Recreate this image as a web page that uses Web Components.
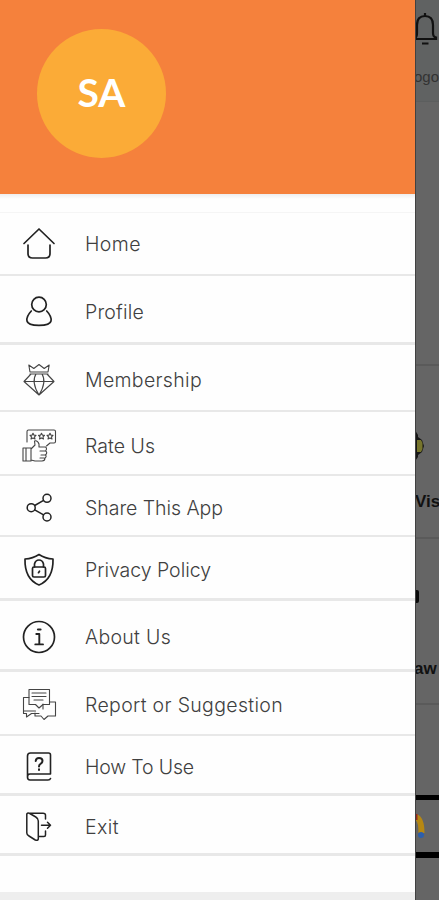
<!DOCTYPE html>
<html lang="en">
<head>
<meta charset="utf-8">
<title>Menu</title>
<style>
  body {
    margin: 0;
    height: 900px;
    overflow: hidden;
    font-family: Inter, "Liberation Sans", sans-serif;
  }
</style>
</head>
<body>
<app-shell></app-shell>

<script>
// Icons are drawn on a 36 x 36 grid
const ICONS = {
  home: `<g stroke-width="1.7"><path d="M3 17.500 18 3l15 14.500"/><path d="M7 19v8.500q0 4.500 4.500 4.500h13q4.500 0 4.500-4.500V19"/></g>`,
  profile: `<g stroke-width="1.7"><circle cx="18" cy="10.500" r="7.300"/><path d="M10.300 17C7 20.500 5.500 24.500 6 27 7 32.800 29 32.800 30 27 30.500 24.500 29 20.500 25.700 17"/></g>`,
  membership: `<g stroke-width="1.100" stroke="#444"><path d="M9 10 7.800 3l5 3.500L18 2.500l5.200 4 5-3.500L27 10zM9 12h18M10 12l-7 7.500L18 33l15-13.500L26 12M3 19.500h30M15 12q-5 8 3 21 8-13 3-21"/></g>`,
  rate: `<g stroke-width="1.100" stroke="#444"><path d="M6 14V3.500q0-1.500 1.500-1.500H33q1.500 0 1.500 1.500v10q0 1.500-1.500 1.500h-4L25.500 18"/><path d="m12 5.200.9 1.900 2.100.2-1.500 1.500.5 2.200-2-1.100-2 1.100.5-2.200L9 7.300l2.100-.2zM20.500 5.200l.9 1.900 2.100.2-1.500 1.500.5 2.200-2-1.100-2 1.100.5-2.200-1.500-1.500 2.100-.2zM29 5.200l.9 1.900 2.100.2-1.500 1.500.5 2.200-2-1.100-2 1.100.5-2.200-1.500-1.500 2.100-.2z"/><path d="M2 20h8v13H2zM5 20v13M10 21l4-4-.5-4q3-1 4.500 3v3h6.500q2 1.500 0 4 2.500 1.500 0 4 1.500 1.500-.5 3 0 3-3 3H14l-4-1M19 23h5M20 27h4M19 30h4"/></g>`,
  share: `<g stroke-width="1.500"><circle cx="10.200" cy="17.700" r="4"/><circle cx="26" cy="8.300" r="4"/><circle cx="26" cy="27" r="4"/><path d="m13.700 15.500 8.900-5.200M13.700 19.800l8.900 5.100"/></g>`,
  privacy: `<g stroke-width="1.700"><path d="M18 2.500q6 4 14 4.500.5 20-14 26Q3.500 27 4 7q8-.5 14-4.500z"/><rect x="11.500" y="15" width="13" height="10" rx="1.500"/><path d="M13.500 15V12q1-4 4.500-4t4.500 4v3M17.500 20.700l1-1.500"/></g>`,
  about: `<circle cx="18" cy="18" r="15.500" stroke-width="1.700"/><path d="M15.300 15h3v10M14.300 25.400h7.700" stroke-width="1.900"/><path d="M17 10.500h2.500" stroke-width="2.200"/>`,
  report: `<g stroke-width="1.100" stroke="#444"><path d="M8 2.500h20.500v15H22L18 21l-3.500-3.500H8zM11 6h14M11 9.500h14M13 13h9"/><path d="M8 10.500H2.500v16h3V30l5-3.500H18"/><path d="M28.500 15h6v14H27l-4 3.500-3-3.500h-6v-3M22 17v5M2.500 24h12"/></g>`,
  help: `<g stroke-width="1.600"><path d="M6.500 28.500V7q0-3 3-3h18q2 0 2 2v19H9q-2.500 0-2.500 3T9 31h18q2 0 2.500-1.500"/><path d="M14.700 12q.3-3 3.300-3 3.500 0 3.500 2.800 0 2-2 3Q18 15.500 18 17.500M18 20.300v.6" stroke-width="2"/></g>`,
  exit: `<g stroke-width="1.500"><path d="M5.800 5q1-1.500 3-.5l6 3.500q2.500 1.500 2.500 4v18q-.5 2-3 1L8 27q-2.200-1.200-2.200-3zM8 4.200h14q2.500 0 2.500 2V10M17.500 27.500H23q1.500 0 1.500-1.500v-4"/><path d="M20.500 16.200h9M26.500 13.200l3 3-3 3"/></g>`,
};

function attach (host, html) {
  const template = document.createElement("template");
  template.innerHTML = html;
  const shadow = host.attachShadow({mode: "open"});
  shadow.appendChild(template.content.cloneNode(true));
  return shadow;
}

class MenuIcon extends HTMLElement {
  connectedCallback () {
    attach(this, `<style>
      :host { display: block; width: 36px; height: 36px; }
      svg { display: block; fill: none; stroke: #222; stroke-linecap: round; stroke-linejoin: round; }
    </style>
    <svg width="36" height="36" viewBox="0 0 36 36">${ICONS[this.getAttribute("name")]}</svg>`);
  }
}

class MenuItem extends HTMLElement {
  connectedCallback () {
    const shadow = attach(this, `<style>
      :host {
        display: flex;
        align-items: center;
        gap: 28px;
        box-sizing: border-box;
        height: ${this.getAttribute("height")}px;
        padding: ${this.getAttribute("drop") || 4}px 0 0 21px;
        border-bottom: ${this.getAttribute("line") || 2}px solid #e8e8e8;
        color: #404040;
        font-size: 19.5px;
        font-weight: 300;
        line-height: 26px;
        white-space: nowrap;
      }
      menu-icon { flex: none; }
    </style>
    <menu-icon name="${this.getAttribute("icon")}"></menu-icon>
    <span id="label"><slot></slot></span>`);

    // Spread the letters so that the label fills its measure
    const label = shadow.getElementById("label");
    const extra = this.getAttribute("measure") - label.getBoundingClientRect().width;
    label.style.letterSpacing = extra / this.textContent.length + "px";
  }
}

class UserAvatar extends HTMLElement {
  connectedCallback () {
    attach(this, `<style>
      :host {
        display: grid;
        place-items: center;
        box-sizing: border-box;
        width: 129px;
        height: 129px;
        padding-bottom: 3px;
        border-radius: 50%;
        background: #fbab37;
        color: white;
        font-family: Lato, sans-serif;
        font-size: 39px;
        font-weight: bold;
        line-height: 1;
      }
    </style><span><slot></slot></span>`);
  }
}

class NavDrawer extends HTMLElement {
  connectedCallback () {
    attach(this, `<style>
      :host {
        display: flex;
        flex-direction: column;
        flex: none;
        width: 415px;
        height: 900px;
        background: #fefefe;
      }
      header {
        box-sizing: border-box;
        height: 194px;
        padding: 29px 37px;
        background: #f5813c;
      }
      nav {
        padding-top: 18px;
        background: linear-gradient(#eee, #fefefe 5px, #fefefe 18px, #f5f5f5 18px, #f5f5f5 19px, #fefefe 19px);
      }
      footer { margin-top: auto; height: 8px; background: #eee; }
    </style>
    <header><slot name="user"></slot></header>
    <nav><slot></slot></nav>
    <footer></footer>`);
  }
}

// The edge of the page that stays visible next to the open drawer
class DimmedPage extends HTMLElement {
  connectedCallback () {
    attach(this, `<style>
      :host {
        display: flex;
        flex-direction: column;
        flex: 1;
        box-sizing: border-box;
        min-width: 0;
        height: 900px;
        overflow: hidden;
        background: #656565;
        border-left: 1px solid #414141;
        font-family: "Liberation Sans", sans-serif;
        color: #111;
      }
      section {
        flex: none;
        box-sizing: border-box;
        border-bottom: 2px solid #5a5a5a;
      }
      svg { display: block; }
      p { margin: 0; font-size: 17px; line-height: 20px; white-space: nowrap; }
      .top { height: 102px; padding-top: 10px; background: #606262; border-bottom: 1px solid #5c5e5e; }
      .top p { margin-top: 21px; margin-left: -2px; color: #333; font-size: 15px; }
      .banner { height: 264px; }
      .visit { height: 173px; padding-top: 60px; }
      .visit p, .draw p { font-weight: bold; }
      .visit p { margin-top: 26px; margin-left: -1px; }
      .draw { height: 166px; padding-top: 51px; }
      .draw p { margin-top: 55px; margin-left: -2px; }
      .space { height: 95px; border-bottom: 5px solid #000; }
      .ad { height: 58px; padding-top: 13px; border-bottom: 6px solid #000; }
    </style>
    <section class="top">
      <svg width="23" height="36" viewBox="0 0 23 36" fill="none" stroke="#111" stroke-width="2.2">
        <path d="M9 3v3M-1 28q2-1 2-5v-8Q1 6 9 6t8 9v8q0 4 3 4.500V29H-1M6 33.500h6.500"/>
      </svg>
      <p>ogo</p>
    </section>
    <section class="banner"></section>
    <section class="visit">
      <svg width="12" height="40" viewBox="0 0 12 40">
        <path d="M-1 4 2 9v2l4 3 2 6-2 6-4 3v2l-3 4z" fill="#171717"/>
        <path d="M1 14h4l1.500 3v6L5 26H1z" fill="#77752c"/>
      </svg>
      <p>Vis</p>
    </section>
    <section class="draw">
      <svg width="6" height="14" viewBox="0 0 6 14"><rect x="-3" width="6" height="13" rx="2" fill="#0b0b0b"/></svg>
      <p>aw</p>
    </section>
    <section class="space"></section>
    <section class="ad">
      <svg width="12" height="28" viewBox="0 0 12 28" fill="none">
        <path d="M0 4q5.500 2 5.500 16" stroke="#b68813" stroke-width="6"/>
        <path d="M-1 1v6" stroke="#942922" stroke-width="5"/>
        <circle cx="5" cy="22" r="3" fill="#2d5fac"/>
      </svg>
    </section>`);
  }
}

class AppShell extends HTMLElement {
  connectedCallback () {
    attach(this, `<style>
      :host { display: flex; width: 439px; height: 900px; }
    </style>
    <nav-drawer>
      <user-avatar slot="user">SA</user-avatar>
      <menu-item icon="home" height="64" drop="2" measure="56">Home</menu-item>
      <menu-item icon="profile" height="69" line="3" drop="6" measure="59">Profile</menu-item>
      <menu-item icon="membership" height="67" measure="117">Membership</menu-item>
      <menu-item icon="rate" height="64" drop="6" measure="70">Rate Us</menu-item>
      <menu-item icon="share" height="61" measure="138">Share This App</menu-item>
      <menu-item icon="privacy" height="64" line="3" measure="126">Privacy Policy</menu-item>
      <menu-item icon="about" height="71" line="3" measure="86">About Us</menu-item>
      <menu-item icon="report" height="64" measure="198">Report or Suggestion</menu-item>
      <menu-item icon="help" height="60" line="3" measure="109">How To Use</menu-item>
      <menu-item icon="exit" height="60" line="3" measure="34">Exit</menu-item>
    </nav-drawer>
    <dimmed-page></dimmed-page>`);
  }
}

customElements.define("menu-icon", MenuIcon);
customElements.define("menu-item", MenuItem);
customElements.define("user-avatar", UserAvatar);
customElements.define("nav-drawer", NavDrawer);
customElements.define("dimmed-page", DimmedPage);
customElements.define("app-shell", AppShell);
</script>
</body>
</html>
